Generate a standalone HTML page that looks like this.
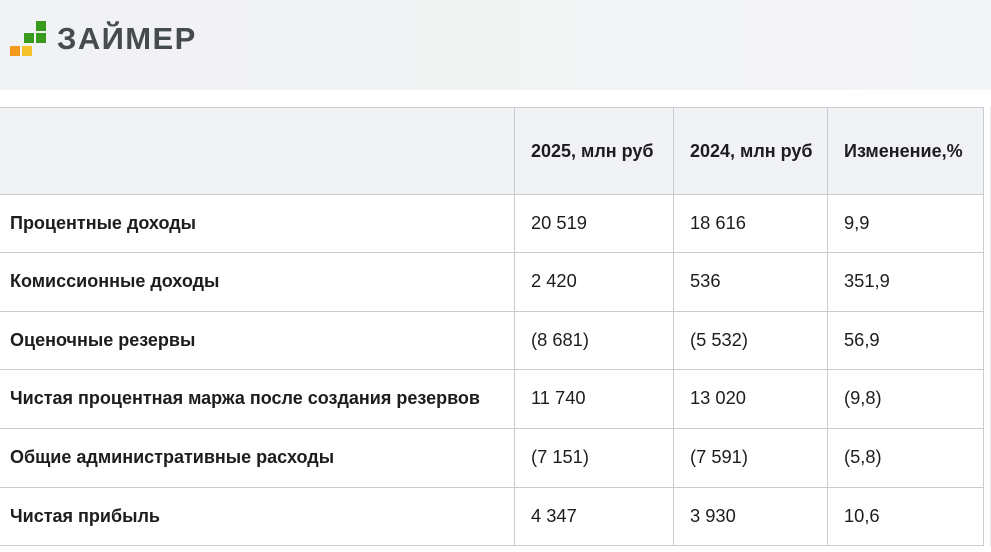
<!DOCTYPE html>
<html><head><meta charset="utf-8"><style>
*{margin:0;padding:0;box-sizing:border-box}
body{width:991px;height:552px;overflow:hidden;background:#fff;font-family:"Liberation Sans",Arial,sans-serif;position:relative;color:#1d1d1f}
.hdr{position:absolute;left:0;top:0;width:991px;height:90px;background:linear-gradient(90deg,#f1f2f3,#f4f5f6)}
.sq{position:absolute;width:10px;height:10px}
.logo{position:absolute;left:57px;top:21px;font-size:31px;font-weight:bold;color:#464b4d;letter-spacing:1.4px}
.hl{position:absolute;left:0;width:984px;height:1px;background:#c9cdd1}
.vl{position:absolute;top:107px;width:1px;height:439px;background:#c9cdd1}
.thbg{position:absolute;left:0;top:107px;width:983px;height:87px;background:#f0f2f4}
.c{position:absolute;font-size:18.3px;white-space:nowrap;line-height:22px}
.b{font-weight:bold;font-size:18px}
</style></head><body>
<div class="hdr"></div>
<div class="sq" style="left:36px;top:21px;background:#3a9a1e"></div>
<div class="sq" style="left:24px;top:33px;background:#3a9a1e"></div>
<div class="sq" style="left:36px;top:33px;background:#3a9a1e"></div>
<div class="sq" style="left:10px;top:46px;background:#f39a1c"></div>
<div class="sq" style="left:22px;top:46px;background:#f5c12a"></div>
<div class="logo">ЗАЙМЕР</div>
<div class="thbg"></div>
<div class="hl" style="top:107px"></div>
<div class="hl" style="top:194px"></div>
<div class="hl" style="top:252px"></div>
<div class="hl" style="top:311px"></div>
<div class="hl" style="top:369px"></div>
<div class="hl" style="top:428px"></div>
<div class="hl" style="top:487px"></div>
<div class="hl" style="top:545px"></div>
<div class="vl" style="left:514px"></div>
<div class="vl" style="left:673px"></div>
<div class="vl" style="left:827px"></div>
<div class="vl" style="left:983px"></div>
<div class="vl" style="left:990px;background:#e4e6e8"></div>

<div class="c b" style="left:531px;top:140px">2025, млн руб</div>
<div class="c b" style="left:690px;top:140px">2024, млн руб</div>
<div class="c b" style="left:844px;top:140px">Изменение,%</div>

<div class="c b" style="left:10px;top:212px">Процентные доходы</div>
<div class="c" style="left:531px;top:212px">20 519</div>
<div class="c" style="left:690px;top:212px">18 616</div>
<div class="c" style="left:844px;top:212px">9,9</div>

<div class="c b" style="left:10px;top:270px">Комиссионные доходы</div>
<div class="c" style="left:531px;top:270px">2 420</div>
<div class="c" style="left:690px;top:270px">536</div>
<div class="c" style="left:844px;top:270px">351,9</div>

<div class="c b" style="left:10px;top:329px">Оценочные резервы</div>
<div class="c" style="left:531px;top:329px">(8 681)</div>
<div class="c" style="left:690px;top:329px">(5 532)</div>
<div class="c" style="left:844px;top:329px">56,9</div>

<div class="c b" style="left:10px;top:387px">Чистая процентная маржа после создания резервов</div>
<div class="c" style="left:531px;top:387px">11 740</div>
<div class="c" style="left:690px;top:387px">13 020</div>
<div class="c" style="left:844px;top:387px">(9,8)</div>

<div class="c b" style="left:10px;top:446px">Общие административные расходы</div>
<div class="c" style="left:531px;top:446px">(7 151)</div>
<div class="c" style="left:690px;top:446px">(7 591)</div>
<div class="c" style="left:844px;top:446px">(5,8)</div>

<div class="c b" style="left:10px;top:505px">Чистая прибыль</div>
<div class="c" style="left:531px;top:505px">4 347</div>
<div class="c" style="left:690px;top:505px">3 930</div>
<div class="c" style="left:844px;top:505px">10,6</div>
</body></html>
